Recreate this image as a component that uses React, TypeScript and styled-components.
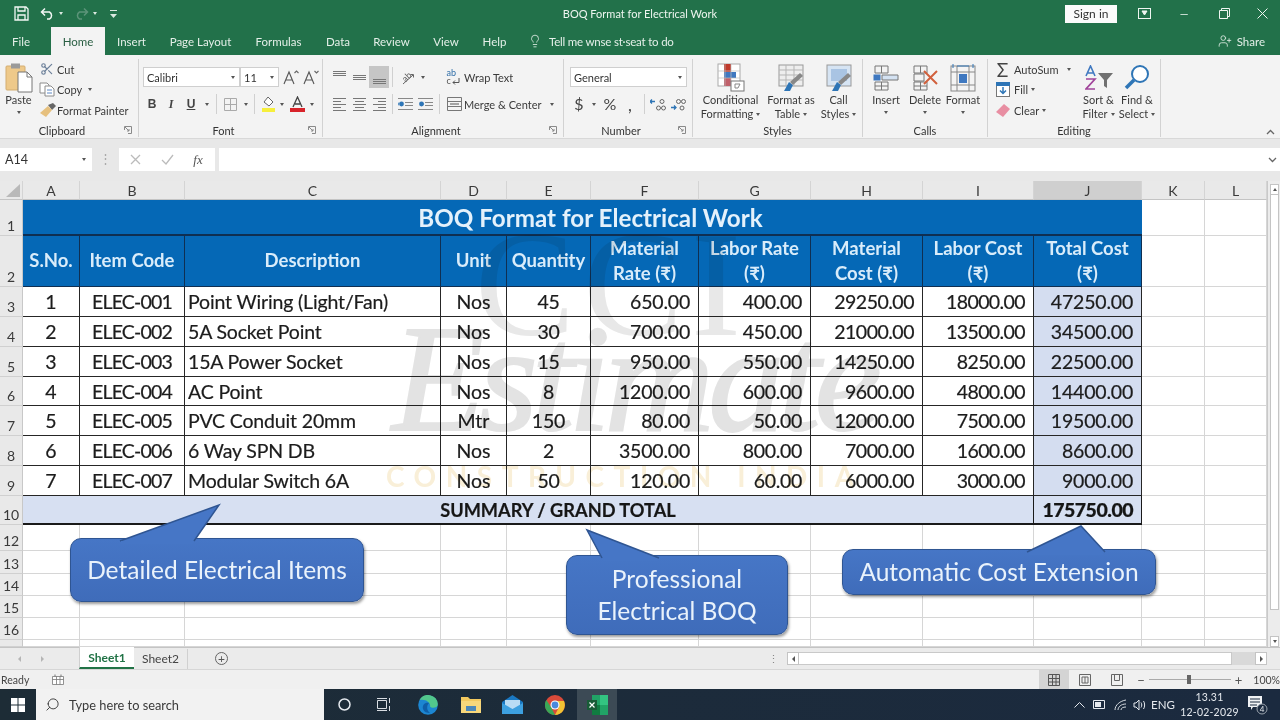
import React from "react";
import styled, { createGlobalStyle } from "styled-components";
import { Scissors, Search, Lightbulb, UserPlus } from "lucide-react";

const GlobalStyle = createGlobalStyle`
  html, body { margin: 0; padding: 0; background: #fff; }
  body { font-family: Lato, "Open Sans", sans-serif; color: #333; }
  * { box-sizing: border-box; }
`;

const Window = styled.div`
  display: flex;
  flex-direction: column;
  width: 1280px;
  height: 720px;
  overflow: hidden;
`;

const TitleBar = styled.header`
  display: grid;
  grid-template-columns: 1fr auto 1fr;
  align-items: center;
  height: 27px;
  background: #22714a;
  color: #eef5f0;
  font-size: 11px;
`;
const BarSide = styled.div<{ $end?: boolean }>`
  display: flex;
  align-items: center;
  height: 100%;
  justify-content: ${(p) => (p.$end ? "flex-end" : "flex-start")};
  padding-left: ${(p) => (p.$end ? 0 : 12)}px;
`;
const Slot = styled.span<{ $w: number; $ml?: number }>`
  display: inline-flex;
  flex: none;
  align-items: center;
  justify-content: center;
  width: ${(p) => p.$w}px;
  margin-left: ${(p) => p.$ml ?? 0}px;
  height: 100%;
`;
const Caret = styled.i<{ $light?: boolean }>`
  display: inline-block;
  flex: none;
  width: 0;
  height: 0;
  border-left: 2.5px solid transparent;
  border-right: 2.5px solid transparent;
  border-top: 3px solid ${(p) => (p.$light ? "#dbe9e1" : "#555")};
`;
const SignIn = styled.button`
  width: 52px;
  height: 18px;
  margin-right: 7px;
  padding: 0;
  border: 0;
  background: #fbfbfb;
  color: #333;
  font: 12px Lato, sans-serif;
`;

const TabBar = styled.nav`
  display: flex;
  align-items: stretch;
  height: 28px;
  background: #22714a;
  color: #e4efe8;
  font-size: 11.5px;
`;
const Tab = styled.div<{ $w: number; $active?: boolean; $pr?: number }>`
  display: flex;
  align-items: center;
  justify-content: center;
  width: ${(p) => p.$w}px;
  padding-right: ${(p) => p.$pr ?? 0}px;
  background: ${(p) => (p.$active ? "#f3f3f3" : "transparent")};
  color: ${(p) => (p.$active ? "#2a5f43" : "inherit")};
`;
const TellMe = styled.div`
  display: flex;
  align-items: center;
  gap: 7px;
  margin-left: 10px;
  letter-spacing: -0.2px;
`;
const Share = styled.div`
  display: flex;
  align-items: center;
  gap: 5px;
  margin-left: auto;
  padding-right: 15px;
`;

const Ribbon = styled.section`
  display: flex;
  height: 84px;
  padding-top: 4px;
  background: #f3f3f3;
  border-bottom: 1px solid #d8d8d8;
  font-size: 11px;
  color: #3a3a3a;
`;
const Group = styled.div<{ $w: number }>`
  display: flex;
  flex: none;
  flex-direction: column;
  width: ${(p) => p.$w}px;
  height: 78px;
  border-right: 1px solid #d2d2d2;
`;
const GroupBody = styled.div<{ $pl?: number }>`
  display: flex;
  flex: 1;
  min-height: 0;
  padding-left: ${(p) => p.$pl ?? 0}px;
`;
const GroupFoot = styled.div`
  display: flex;
  align-items: center;
  flex: none;
  height: 14px;
`;
const GroupLabel = styled.span`
  flex: 1;
  text-align: center;
  color: #333;
`;
const Launcher = styled.span`
  display: flex;
  width: 14px;
  justify-content: flex-start;
`;
const Collapse = styled.div`
  align-self: flex-end;
  margin: 0 5px 1px auto;
`;
const Col = styled.div<{ $w?: number }>`
  display: flex;
  flex-direction: column;
  flex: none;
  width: ${(p) => (p.$w ? `${p.$w}px` : "auto")};
`;
const SmallRow = styled.div`
  display: flex;
  align-items: center;
  height: 20.5px;
  white-space: nowrap;
`;
const TwoRows = styled.div<{ $w?: number }>`
  display: flex;
  flex-direction: column;
  gap: 7px;
  padding-top: 8px;
  flex: none;
  width: ${(p) => (p.$w ? `${p.$w}px` : "auto")};
`;
const ToolRow = styled.div`
  display: flex;
  align-items: center;
  height: 20px;
  white-space: nowrap;
`;
const Select = styled.div<{ $w: number }>`
  display: flex;
  align-items: center;
  justify-content: space-between;
  width: ${(p) => p.$w}px;
  height: 20px;
  padding: 0 4px 0 3px;
  background: #fff;
  border: 1px solid #cfcfcf;
  color: #333;
`;
const Sep = styled.span<{ $w: number }>`
  display: flex;
  justify-content: center;
  flex: none;
  width: ${(p) => p.$w}px;
  height: 20px;
  &::after {
    content: "";
    width: 1px;
    background: #d0d0d0;
  }
`;
const Pressed = styled(Slot)`
  background: #c6c6c6;
  height: 22px;
`;
const BoldLetter = styled.span<{ $italic?: boolean; $under?: boolean }>`
  font-size: 12px;
  font-weight: 700;
  font-style: ${(p) => (p.$italic ? "italic" : "normal")};
  font-family: ${(p) => (p.$italic ? '"Liberation Serif"' : '"Liberation Sans"')}, serif;
  text-decoration: ${(p) => (p.$under ? "underline" : "none")};
  color: #444;
`;
const Glyph = styled.span<{ $size: number }>`
  font-size: ${(p) => p.$size}px;
  color: #444;
  line-height: 1;
`;
const Big = styled.div<{ $w: number }>`
  display: flex;
  flex: none;
  flex-direction: column;
  align-items: center;
  width: ${(p) => p.$w}px;
  padding-top: 3px;
  line-height: 14px;
  white-space: nowrap;
  text-align: center;
`;
const BigIcon = styled.div`
  display: flex;
  align-items: center;
  justify-content: center;
  flex: none;
  height: 31px;
`;
const BigCaret = styled.div`
  display: flex;
  justify-content: center;
  padding-top: 4px;
  height: 14px;
`;
const ToolLine = styled.span`
  display: inline-flex;
  align-items: center;
  gap: 3px;
`;
const TinyWord = styled.span<{ $turned?: boolean; $blue?: boolean }>`
  display: block;
  font-size: 9px;
  line-height: 8px;
  color: ${(p) => (p.$blue ? "#2f6ea8" : "#555")};
  transform: ${(p) => (p.$turned ? "rotate(-45deg)" : "none")};
`;
const OrientStack = styled.span`
  position: relative;
  display: flex;
  align-items: center;
  justify-content: center;
  width: 17px;
  height: 17px;
`;
const OrientArrow = styled.svg`
  position: absolute;
  left: 1px;
  top: 3px;
`;
const WrapStack = styled.span`
  display: flex;
  flex-direction: column;
  width: 15px;
`;
const WrapLine = styled.span`
  display: flex;
  align-items: center;
  gap: 1px;
`;

const FormulaBand = styled.div`
  display: flex;
  align-items: flex-start;
  height: 42px;
  padding-top: 9px;
  background: #e8e8e8;
`;
const NameBox = styled.div`
  display: flex;
  align-items: center;
  justify-content: space-between;
  width: 92px;
  height: 23px;
  padding: 0 6px 0 5px;
  background: #fff;
  font-size: 12.5px;
`;
const Dots = styled.div`
  display: flex;
  justify-content: center;
  width: 27px;
  height: 23px;
  color: #aaa;
  line-height: 21px;
  font-size: 13px;
`;
const FxBox = styled.div`
  display: flex;
  align-items: center;
  width: 96px;
  height: 23px;
  margin-right: 4px;
  background: #fff;
`;
const FxText = styled.span`
  font: italic 13px "Liberation Serif", serif;
  color: #555;
`;
const FormulaInput = styled.div`
  display: flex;
  align-items: center;
  justify-content: flex-end;
  flex: 1;
  height: 23px;
  padding-right: 3px;
  background: #fff;
`;

const SheetArea = styled.main`
  position: relative;
  display: flex;
  height: 466px;
`;
const Grid = styled.div`
  display: grid;
  grid-template-columns: 23px 57px 105px 256px 66px 84px 108px 112px 112px 111px 108px 63px 62px;
  grid-template-rows: 19px 36px 51px 30px 30px 30px 29px 30px 30px 30px 29px 26px 23px 22px 22px 22px 7px;
  flex: none;
  width: 1267px;
  background: #fff;
  overflow: hidden;
`;
const ColHead = styled.div<{ $on?: boolean }>`
  display: flex;
  align-items: center;
  justify-content: center;
  background: ${(p) => (p.$on ? "#cfcfcf" : "#e9e9e9")};
  border-right: 1px solid #d4d4d4;
  border-bottom: 1px solid #c4c4c4;
  font-size: 14px;
  color: #3a3a3a;
`;
const Corner = styled(ColHead)`
  align-items: flex-end;
  justify-content: flex-end;
  padding: 0 2px 2px 0;
`;
const RowHead = styled.div`
  display: flex;
  align-items: flex-end;
  justify-content: center;
  background: #e9e9e9;
  border-right: 1px solid #c8c8c8;
  border-bottom: 1px solid #d0d0d0;
  font-size: 14px;
  line-height: 19px;
  color: #3a3a3a;
`;
const Blank = styled.div`
  border-right: 1px solid #d6d6d6;
  border-bottom: 1px solid #d6d6d6;
`;
const TitleCell = styled.div`
  grid-column: span 10;
  display: flex;
  align-items: center;
  justify-content: center;
  padding-left: 16px;
  background: #0568b6;
  border-bottom: 2px solid #0f2f52;
  color: #e4f1fb;
  font-size: 24.2px;
  font-weight: 700;
`;
const HeadCell = styled.div`
  display: flex;
  align-items: center;
  justify-content: center;
  background: #0568b6;
  border-right: 1.5px solid #0f2f52;
  border-bottom: 1.5px solid #0f2f52;
  color: #d9ecfa;
  font-size: 18.5px;
  font-weight: 700;
  line-height: 25px;
  text-align: center;
  padding-bottom: 1px;
`;
const DataCell = styled.div<{ $align: "left" | "center" | "right"; $total?: boolean; $ls: number }>`
  display: flex;
  align-items: center;
  justify-content: ${(p) =>
    p.$align === "left" ? "flex-start" : p.$align === "right" ? "flex-end" : "center"};
  padding: 0 ${(p) => (p.$align === "right" ? 8 : 0)}px 0 ${(p) => (p.$align === "left" ? 3 : 0)}px;
  background: ${(p) => (p.$total ? "#d4ddf0" : "transparent")};
  border-right: 1.5px solid #262626;
  border-bottom: 1.5px solid #262626;
  color: #1c1c1c;
  font-size: 19.5px;
  letter-spacing: ${(p) => p.$ls}px;
  -webkit-text-stroke: 0.2px #1c1c1c;
  white-space: nowrap;
`;
const SummaryCell = styled.div`
  grid-column: span 9;
  display: flex;
  align-items: center;
  justify-content: center;
  padding-left: 60px;
  background: #d7e0f2;
  border-right: 1.5px solid #1a1a1a;
  border-bottom: 2px solid #1a1a1a;
  color: #161616;
  font-size: 18.2px;
  font-weight: 700;
  -webkit-text-stroke: 0.2px #161616;
  white-space: nowrap;
`;
const SummaryTotal = styled(SummaryCell)`
  grid-column: span 1;
  justify-content: flex-end;
  padding: 0 8px 0 0;
  font-size: 19.5px;
  font-weight: 900;
  letter-spacing: -0.5px;
`;

const Watermark = styled.div`
  position: absolute;
  inset: 0;
  pointer-events: none;
  mix-blend-mode: multiply;
  overflow: hidden;
`;
const MarkTop = styled.div`
  position: absolute;
  left: 475px;
  top: 28px;
  font: 150px/1 "Liberation Serif", serif;
  letter-spacing: 8px;
  color: #e8e8e8;
`;
const MarkScript = styled.div`
  position: absolute;
  left: 392px;
  top: 122px;
  font: italic 400 152px/1 "Liberation Serif", serif;
  letter-spacing: -6px;
  color: #e3e3e3;
  -webkit-text-stroke: 2px #e3e3e3;
`;
const MarkLine = styled.div`
  position: absolute;
  left: 386px;
  top: 281px;
  font: 700 28px/1 Lato, sans-serif;
  letter-spacing: 9.5px;
  color: #f9efd8;
  white-space: nowrap;
`;

const Callout = styled.div<{ $x: number; $y: number; $w: number; $h: number }>`
  position: absolute;
  left: ${(p) => p.$x}px;
  top: ${(p) => p.$y}px;
  width: ${(p) => p.$w}px;
  height: ${(p) => p.$h}px;
  display: flex;
  align-items: center;
  justify-content: center;
  text-align: center;
  background: linear-gradient(#4676c6, #3f6cba);
  border: 1.5px solid #2f5592;
  border-radius: 11px;
  box-shadow: 1px 2px 3px rgba(0, 0, 0, 0.4);
  color: #e9f2fb;
  font-size: 24.5px;
  line-height: 32px;
`;
const Tail = styled.svg<{ $x: number; $h: number }>`
  position: absolute;
  left: ${(p) => p.$x}px;
  bottom: calc(100% - 2px);
  height: ${(p) => p.$h}px;
  overflow: visible;
`;

const VScroll = styled.aside`
  display: flex;
  flex-direction: column;
  flex: 1;
  background: #ececec;
  border-left: 1px solid #c9c9c9;
  padding: 3px 1px 0 2px;
`;
const ScrollBtn = styled.div<{ $down?: boolean }>`
  display: flex;
  align-items: center;
  justify-content: center;
  height: 11px;
  background: #fff;
  border: 1px solid #c4c4c4;
  &::after {
    content: "";
    border-left: 2.5px solid transparent;
    border-right: 2.5px solid transparent;
    ${(p) => (p.$down ? "border-top: 3px solid #555;" : "border-bottom: 3px solid #555;")}
  }
`;
const VThumb = styled.div`
  height: 415px;
  background: #fff;
  border: 1px solid #c4c4c4;
  border-top: 0;
`;
const VTrack = styled.div`
  flex: 1;
`;

const SheetStrip = styled.div`
  display: flex;
  align-items: center;
  height: 23px;
  background: #ebebeb;
  border-top: 1px solid #c4c4c4;
  border-bottom: 1px solid #d6d6d6;
  font-size: 12px;
`;
const NavArrow = styled.span<{ $w: number; $right?: boolean }>`
  display: flex;
  justify-content: center;
  width: ${(p) => p.$w}px;
  &::after {
    content: "";
    border-top: 3px solid transparent;
    border-bottom: 3px solid transparent;
    ${(p) => (p.$right ? "border-left: 3px solid #b5b5b5;" : "border-right: 3px solid #b5b5b5;")}
  }
`;
const SheetTab = styled.div<{ $active?: boolean; $w: number }>`
  display: flex;
  align-items: center;
  justify-content: center;
  width: ${(p) => p.$w}px;
  height: 22px;
  margin-top: -1px;
  background: ${(p) => (p.$active ? "#fff" : "transparent")};
  border-left: ${(p) => (p.$active ? "1px solid #cfcfcf" : "0")};
  border-bottom: ${(p) => (p.$active ? "2px solid #217346" : "0")};
  color: ${(p) => (p.$active ? "#217346" : "#444")};
  font-weight: ${(p) => (p.$active ? 700 : 400)};
`;
const AddSheet = styled.span`
  display: flex;
  align-items: center;
  justify-content: center;
  width: 13px;
  height: 13px;
  margin-left: 27px;
  border: 1px solid #666;
  border-radius: 50%;
  color: #555;
  font-size: 12px;
  line-height: 1;
`;
const SplitDots = styled.span`
  margin-left: auto;
  width: 14px;
  color: #888;
  text-align: center;
  font-size: 11px;
  line-height: 1;
`;
const HScroll = styled.div`
  display: flex;
  align-items: center;
  width: 480px;
  height: 13px;
  margin-right: 13px;
  background: #d9d9d9;
`;
const HButton = styled.span<{ $right?: boolean }>`
  display: flex;
  align-items: center;
  justify-content: center;
  width: 12px;
  height: 13px;
  background: #fff;
  border: 1px solid #c4c4c4;
  margin-left: ${(p) => (p.$right ? "23px" : "0")};
  &::after {
    content: "";
    border-top: 3px solid transparent;
    border-bottom: 3px solid transparent;
    ${(p) => (p.$right ? "border-left: 3px solid #555;" : "border-right: 3px solid #555;")}
  }
`;
const HThumb = styled.span`
  width: 433px;
  height: 13px;
  background: #fff;
  border: 1px solid #c9c9c9;
  border-left: 0;
`;

const StatusBar = styled.footer`
  display: flex;
  align-items: center;
  height: 19px;
  background: #f0f0f0;
  padding-left: 1px;
  font-size: 10.5px;
  color: #444;
`;
const StatusRight = styled.div`
  display: flex;
  align-items: center;
  height: 100%;
  margin-left: auto;
`;
const ViewBtn = styled(Slot)<{ $on?: boolean }>`
  background: ${(p) => (p.$on ? "#d4d4d4" : "transparent")};
`;
const ZoomSign = styled.span<{ $w: number }>`
  width: ${(p) => p.$w}px;
  text-align: center;
  font-size: 13px;
  color: #555;
`;
const ZoomTrack = styled.div`
  position: relative;
  width: 82px;
  height: 1px;
  background: #aaa;
`;
const ZoomThumb = styled.span`
  position: absolute;
  left: 38px;
  top: -4px;
  width: 4px;
  height: 9px;
  background: #666;
`;
const ZoomValue = styled.span`
  width: 34px;
  text-align: right;
  font-size: 10.5px;
`;

const Taskbar = styled.div`
  display: flex;
  align-items: center;
  height: 31px;
  background: linear-gradient(90deg, #1d2c36, #1b2a3f);
  color: #e5e9ee;
`;
const SearchBox = styled.div`
  display: flex;
  align-items: center;
  gap: 9px;
  width: 288px;
  height: 100%;
  padding-left: 9px;
  background: #f2f2f2;
  color: #3a3a3a;
  font-size: 12.8px;
`;
const ActiveApp = styled(Slot)`
  background: #3c4a55;
`;
const Tray = styled.div`
  display: flex;
  align-items: center;
  height: 100%;
  margin-left: auto;
  padding-right: 6px;
  font-size: 11.5px;
`;
const Clock = styled.div`
  width: 65px;
  text-align: center;
  font-size: 10.5px;
  line-height: 15px;
  letter-spacing: 0.2px;
`;

/* ---------- icons ---------- */

const SaveIcon = () => (
  <svg width="15" height="15" viewBox="0 0 15 15" fill="none" stroke="#f2f7f4" strokeWidth="1.3">
    <path d="M1 1h11l2 2v11H1z" />
    <path d="M4 1v4h7V1M4 14V9h7v5" />
  </svg>
);
const UndoIcon = ({ faded }: { faded?: boolean }) => (
  <svg
    width="15"
    height="13"
    viewBox="0 0 15 13"
    fill="none"
    stroke={faded ? "#5c9479" : "#f2f7f4"}
    strokeWidth="1.5"
    style={faded ? { transform: "scaleX(-1)" } : undefined}
  >
    <path d="M1.5 5h8a4 4 0 0 1 0 7H7M5 1.5 1.5 5 5 8.5" />
  </svg>
);
const QuickMenu = () => (
  <svg width="7" height="8" viewBox="0 0 7 8" fill="#dbe9e1">
    <rect y="0" width="7" height="1" />
    <path d="M0 4h7L3.5 8z" />
  </svg>
);
const RibbonMode = () => (
  <svg width="13" height="11" viewBox="0 0 13 11" fill="none" stroke="#eef5f0">
    <rect x="0.5" y="0.5" width="12" height="10" />
    <path d="M4 3h5L6.5 7z" fill="#eef5f0" />
  </svg>
);
const Restore = () => (
  <svg width="11" height="11" viewBox="0 0 11 11" fill="none" stroke="#eef5f0">
    <path d="M.5 2.5h8v8h-8zM2.5 2.5v-2h8v8h-2" />
  </svg>
);
const CloseX = () => (
  <svg width="11" height="11" viewBox="0 0 11 11" stroke="#eef5f0">
    <path d="M.5.5l10 10M10.5.5l-10 10" />
  </svg>
);
const PasteIcon = () => (
  <svg width="28" height="30" viewBox="0 0 28 30">
    <rect x="1" y="3" width="19" height="24" rx="1" fill="#eec98a" stroke="#d3ad70" />
    <rect x="6" y="0.5" width="9" height="5" fill="#9a9a9a" />
    <path d="M13 9h9l5 5v15H13z" fill="#fff" stroke="#777" />
    <path d="M22 9v5h5" fill="none" stroke="#777" />
  </svg>
);
const CopyIcon = () => (
  <svg width="16" height="15" viewBox="0 0 16 15" fill="#fff" stroke="#8c8c8c">
    <path d="M1 1h7l2 2v8H1z" />
    <path d="M6 4h6l3 3v7H6z" />
    <path d="M8 8h5M8 11h5" stroke="#5c88c4" />
  </svg>
);
const PainterIcon = () => (
  <svg width="17" height="14" viewBox="0 0 17 14">
    <path d="M9 2l5-2 3 3-4 4z" fill="#666" />
    <path d="M1 10l8-7 4 4-6 7z" fill="#e6c07e" />
  </svg>
);
const Launch = () => (
  <svg width="8" height="8" viewBox="0 0 8 8" fill="none" stroke="#8a8a8a">
    <path d="M.5 4V.5H7.5V7.5H4" />
    <path d="M1 1l4 4M5 3v2H3" />
  </svg>
);
const GrowA = ({ up }: { up?: boolean }) => (
  <svg width="16" height="15" viewBox="0 0 16 15" fill="none" stroke="#555" strokeWidth="1.1">
    <path d="M1 14 6 2l5 12M3 10h6" />
    <path d={up ? "M11.5 3l2-2 2 2" : "M11.5 1l2 2 2-2"} stroke="#666" />
  </svg>
);
const BorderIcon = () => (
  <svg width="13" height="13" viewBox="0 0 13 13" fill="none" stroke="#aaa">
    <path d="M.5.5h12v12H.5zM6.5.5v12M.5 6.5h12" />
  </svg>
);
const FillIcon = () => (
  <svg width="15" height="16" viewBox="0 0 15 16">
    <path d="M7 1l5 5-4 4-5-4z" fill="#fff" stroke="#666" />
    <rect x="1" y="12" width="13" height="4" fill="#f6ef3c" />
  </svg>
);
const ColorA = () => (
  <svg width="15" height="16" viewBox="0 0 15 16">
    <path d="M3 11 7.5 1 12 11M5 8h5" fill="none" stroke="#444" strokeWidth="1.3" />
    <rect x="0" y="12" width="15" height="4" fill="#d8232a" />
  </svg>
);
const Lines = ({ kind }: { kind: "top" | "mid" | "bottom" | "left" | "center" | "right" }) => {
  if (kind === "top" || kind === "mid" || kind === "bottom") {
    const y = kind === "top" ? 1 : kind === "mid" ? 5 : 9;
    return (
      <svg width="13" height="14" viewBox="0 0 13 14" stroke="#777">
        <path d={`M0 ${y}.5h13M0 ${y + 2}.5h13M0 ${y + 4}.5h13`} />
      </svg>
    );
  }
  const short = kind === "left" ? "M0 3.5h8M0 9.5h8" : kind === "center" ? "M2 3.5h9M2 9.5h9" : "M5 3.5h8M5 9.5h8";
  return (
    <svg width="13" height="13" viewBox="0 0 13 13" stroke="#777">
      <path d={`M0 .5h13M0 6.5h13M0 12.5h13${short}`} />
    </svg>
  );
};
const Orient = () => (
  <OrientStack>
    <TinyWord $turned>ab</TinyWord>
    <OrientArrow width="15" height="13" viewBox="0 0 15 13" fill="none" stroke="#666">
      <path d="M3 12 13 3M10.500 2.500H13.500V5.500" />
    </OrientArrow>
  </OrientStack>
);
const Indent = ({ flip }: { flip?: boolean }) => (
  <svg width="15" height="12" viewBox="0 0 15 12" stroke="#888">
    <path d="M0 .5h15M7 4.500h8M7 7.500h8M0 11.500h15" />
    <circle cx="3.500" cy="6" r="2.400" fill="#2e75b6" stroke="none" />
    <path d={flip ? "M6 6 4 4v4z" : "M0 6l1-2v4z"} fill="#2e75b6" stroke="none" />
  </svg>
);
const WrapIcon = () => (
  <WrapStack>
    <TinyWord $blue>ab</TinyWord>
    <WrapLine>
      <TinyWord>c</TinyWord>
      <svg width="8" height="7" viewBox="0 0 8 7" fill="none" stroke="#555">
        <path d="M1 4.500h6V0M1 4.500l2-2M1 4.500l2 2" />
      </svg>
    </WrapLine>
  </WrapStack>
);
const MergeIcon = () => (
  <svg width="15" height="14" viewBox="0 0 15 14" fill="none" stroke="#777">
    <path d="M.5.5h14v13H.5zM.5 4.500h14M.5 9.500h14" />
    <path d="M3 7h9" stroke="#555" />
  </svg>
);
const DecIcon = ({ more }: { more?: boolean }) => (
  <svg width="17" height="13" viewBox="0 0 17 13" fill="none">
    <path d={more ? "M0 3.500h5M2 1.500 0 3.500l2 2" : "M1 9.500h5M4 7.500l2 2-2 2"} stroke="#2e75b6" strokeWidth="1.3" />
    <circle cx="8.500" cy={more ? 10 : 3.5} r="2" stroke="#666" />
    <circle cx="13.500" cy={more ? 10 : 3.5} r="2" stroke="#666" />
    <circle cx="12" cy={more ? 3.5 : 10} r="2" stroke="#666" />
  </svg>
);
const CondIcon = () => (
  <svg width="28" height="29" viewBox="0 0 28 29">
    <rect x="1" y="1" width="22" height="22" fill="#fff" stroke="#aaa" />
    <rect x="7" y="1" width="7" height="8" fill="#c0392b" />
    <rect x="7" y="9" width="12" height="6" fill="#3f78c0" />
    <rect x="7" y="15" width="7" height="8" fill="#c0606a" />
    <path d="M8 1v22M14 1v22M1 8h22M1 15h22" stroke="#bbb" strokeWidth=".7" />
    <rect x="14" y="18" width="13" height="10" fill="#fff" stroke="#777" />
    <path d="M18 21h5l-2 4h-3z" fill="none" stroke="#888" />
  </svg>
);
const TableIcon = ({ light }: { light?: boolean }) => (
  <svg width="28" height="28" viewBox="0 0 28 28">
    <rect x="2" y="1" width="24" height="21" fill={light ? "#d6e4f3" : "#eee"} stroke="#999" />
    {!light && <path d="M2 6h24M2 11h24M2 16h24M9 1v21M17 1v21" stroke="#b5b5b5" />}
    {light && <rect x="6" y="5" width="16" height="12" fill="#a9c4e3" />}
    <path d="M7 27l5-9 4 3-3 6z" fill="#2e75b6" />
    <path d="M13 18l10-9 3 3-10 9z" fill="#888" />
  </svg>
);
const InsertIcon = ({ cross }: { cross?: boolean }) => (
  <svg width="28" height="26" viewBox="0 0 28 26" fill="#fff" stroke="#777">
    <path d="M3 1h13v7H3zM9.500 1v7" fill="none" />
    <path d="M3 17h13v8H3zM9.500 17v8M3 21h13" fill="none" />
    {cross ? (
      <>
        <path d="M3 9h10v7H3z" fill="none" />
        <path d="M13 6l13 13M26 6 13 19" stroke="#d1603d" strokeWidth="2" />
      </>
    ) : (
      <>
        <rect x="2" y="10" width="6" height="5" fill="#3f78c0" stroke="#3f78c0" />
        <path d="M10 10h16v5H10z" fill="#d4e2f2" />
      </>
    )}
  </svg>
);
const FormatIcon = () => (
  <svg width="26" height="28" viewBox="0 0 26 28" fill="#fff" stroke="#888">
    <rect x="1" y="2" width="24" height="25" fill="#f4f4f4" />
    <path d="M7 2v25M19 2v25M1 8h24M1 21h24" />
    <rect x="9" y="10" width="8" height="9" fill="#3f78c0" stroke="none" />
    <path d="M3 0v4M23 0v4M7 2h12" stroke="#2e75b6" />
  </svg>
);
const FillDown = () => (
  <svg width="14" height="15" viewBox="0 0 14 15" fill="#fff" stroke="#777">
    <rect x=".5" y=".5" width="13" height="14" />
    <rect x=".5" y=".5" width="13" height="3" fill="#2e75b6" stroke="#2e75b6" />
    <path d="M7 5v6M4 8.500l3 3 3-3" stroke="#2e75b6" fill="none" strokeWidth="1.5" />
  </svg>
);
const Eraser = () => (
  <svg width="14" height="13" viewBox="0 0 14 13">
    <path d="M8 0l6 5-7 8-7-5z" fill="#e88ea2" />
  </svg>
);
const SortIcon = () => (
  <svg width="28" height="26" viewBox="0 0 28 26">
    <path d="M1 11 5.500 1 10 11M3 8h5" fill="none" stroke="#3f78c0" strokeWidth="1.6" />
    <path d="M1 14h9L1 24h9" fill="none" stroke="#a0449a" strokeWidth="1.7" />
    <path d="M13 8h15l-6 7v8l-3-2v-6z" fill="#707070" />
  </svg>
);
const FindIcon = () => (
  <svg width="27" height="27" viewBox="0 0 27 27" fill="none">
    <circle cx="16" cy="10" r="8" fill="#fff" stroke="#2e75b6" strokeWidth="2" />
    <path d="M10 16 2 24" stroke="#2e75b6" strokeWidth="3.5" />
  </svg>
);
const MacroIcon = () => (
  <svg width="12" height="11" viewBox="0 0 12 11" fill="#fff" stroke="#777">
    <path d="M.5 2.500h11v8H.5zM.5 5.500h11M4.500 2.500v8M8 2.500v8" strokeWidth=".8" />
    <path d="M3 .5v2M9 .5v2" />
  </svg>
);
const NormalView = () => (
  <svg width="12" height="12" viewBox="0 0 12 12" fill="none" stroke="#555">
    <path d="M.5.500h11v11H.5zM.5 4.500h11M.5 8h11M4.500.500v11M8 .500v11" />
  </svg>
);
const PageView = () => (
  <svg width="12" height="12" viewBox="0 0 12 12" fill="none" stroke="#666">
    <path d="M.5.500h11v11H.5zM3 3h6v6H3zM6 3v6" />
  </svg>
);
const BreakView = () => (
  <svg width="12" height="12" viewBox="0 0 12 12" fill="none" stroke="#666">
    <path d="M.5.500h11v11H.5zM3.500 .5v6h5v-6" />
  </svg>
);
const StartLogo = () => (
  <svg width="14" height="14" viewBox="0 0 14 14" fill="#fff">
    <rect width="6.500" height="6.500" />
    <rect x="7.500" width="6.500" height="6.500" />
    <rect y="7.500" width="6.500" height="6.500" />
    <rect x="7.500" y="7.500" width="6.500" height="6.500" />
  </svg>
);
const TaskView = () => (
  <svg width="15" height="13" viewBox="0 0 15 13" fill="none" stroke="#d9dde2">
    <path d="M.5 2.500h9v8h-9zM0 .5h10M0 12.500h10M12.500 0v5M12.500 8v5" />
  </svg>
);
const EdgeIcon = () => (
  <svg width="20" height="20" viewBox="0 0 20 20">
    <circle cx="10" cy="10" r="9.800" fill="#1c86d1" />
    <path d="M1.500 5A9.800 9.800 0 0 1 19.800 9C19.800 13 14 14 12 11.500 13 8 8 3.500 1.500 5z" fill="#52c78c" />
    <path d="M11 8c-4-1-7 2-6 6 1 3 4 4 7 4-3-2-4-7-1-10z" fill="#0f5ea8" />
  </svg>
);
const FolderIcon = () => (
  <svg width="20" height="17" viewBox="0 0 20 17">
    <path d="M0 1h7l2 2h11v14H0z" fill="#f3c95f" />
    <rect y="5" width="20" height="12" fill="#f7d77b" />
    <rect x="5" y="10" width="10" height="5" fill="#4c87b9" />
  </svg>
);
const MailIcon = () => (
  <svg width="21" height="19" viewBox="0 0 21 19">
    <path d="M10.500 0 21 7v12H0V7z" fill="#1a78c2" />
    <path d="M3 5h15v6l-7.500 4L3 11z" fill="#b9dcf5" />
    <path d="M0 8l10.500 6L21 8v11H0z" fill="#3da0e0" />
  </svg>
);
const ChromeIcon = () => (
  <svg width="20" height="20" viewBox="0 0 20 20">
    <circle cx="10" cy="10" r="10" fill="#d94a3a" />
    <path d="M10 20A10 10 0 0 1 1.300 5L6 12l4 8z" fill="#3aa757" />
    <path d="M10 20 14 12 10 6h9A10 10 0 0 1 10 20z" fill="#f2c233" />
    <circle cx="10" cy="10" r="4.500" fill="#fff" />
    <circle cx="10" cy="10" r="3.400" fill="#4a89dc" />
  </svg>
);
const ExcelIcon = () => (
  <svg width="21" height="20" viewBox="0 0 21 20">
    <rect x="5" y="0" width="16" height="20" fill="#21a366" />
    <rect x="13" y="0" width="8" height="10" fill="#33c481" />
    <rect x="5" y="10" width="8" height="10" fill="#107c41" />
    <rect x="0" y="5" width="10" height="10" fill="#185c37" />
    <path d="M2.500 7.500l5 5M7.500 7.500l-5 5" stroke="#fff" strokeWidth="1.200" />
  </svg>
);
const TrayUp = () => (
  <svg width="11" height="6" viewBox="0 0 11 6" fill="none" stroke="#e5e9ee">
    <path d="M.5 5.500l5-5 5 5" />
  </svg>
);
const Battery = () => (
  <svg width="13" height="9" viewBox="0 0 13 9" fill="none" stroke="#e5e9ee">
    <path d="M.5.500h11v8H.5z" />
    <rect x="2" y="2" width="6" height="5" fill="#e5e9ee" stroke="none" />
  </svg>
);
const Wifi = () => (
  <svg width="13" height="12" viewBox="0 0 13 12" fill="none" stroke="#d5dae0">
    <path d="M1 11C1 6 6 2 12 1M4 11c0-3 3-6 8-6M7 11c0-2 2-3 5-3" />
  </svg>
);
const Volume = () => (
  <svg width="13" height="12" viewBox="0 0 13 12" fill="none" stroke="#e5e9ee">
    <path d="M1 4h2l3-3v10L3 8H1zM8 3.500c1 1.500 1 3.500 0 5M10.500 2c1.500 2 1.500 6 0 8" />
  </svg>
);
const Notify = () => (
  <svg width="22" height="20" viewBox="0 0 22 20">
    <path d="M1 1h14v11H6l-2 3v-3H1z" fill="#f0f2f4" />
    <path d="M3 4h10M3 7h10M3 10h7" stroke="#1b2a3f" />
    <circle cx="15" cy="14" r="5" fill="#1b2a3f" stroke="#9aa3ad" />
    <text x="15" y="17" fontSize="8" textAnchor="middle" fill="#dfe4e8" fontFamily="Lato, sans-serif">4</text>
  </svg>
);
const Chevron = ({ up }: { up?: boolean }) => (
  <svg width="9" height="6" viewBox="0 0 9 6" fill="none" stroke="#666" strokeWidth="1.300">
    <path d={up ? "M1 5l3.500-3.500L8 5" : "M1 1l3.500 3.500L8 1"} />
  </svg>
);

/* ---------- data ---------- */

const COLUMNS = ["A", "B", "C", "D", "E", "F", "G", "H", "I", "J", "K", "L"];
const HEADERS: React.ReactNode[] = [
  "S.No.",
  "Item Code",
  "Description",
  "Unit",
  "Quantity",
  <>Material<br />Rate (₹)</>,
  <>Labor Rate<br />(₹)</>,
  <>Material<br />Cost (₹)</>,
  <>Labor Cost<br />(₹)</>,
  <>Total Cost<br />(₹)</>,
];
const ITEMS = [
  ["1", "ELEC-001", "Point Wiring (Light/Fan)", "Nos", "45", "650.00", "400.00", "29250.00", "18000.00", "47250.00"],
  ["2", "ELEC-002", "5A Socket Point", "Nos", "30", "700.00", "450.00", "21000.00", "13500.00", "34500.00"],
  ["3", "ELEC-003", "15A Power Socket", "Nos", "15", "950.00", "550.00", "14250.00", "8250.00", "22500.00"],
  ["4", "ELEC-004", "AC Point", "Nos", "8", "1200.00", "600.00", "9600.00", "4800.00", "14400.00"],
  ["5", "ELEC-005", "PVC Conduit 20mm", "Mtr", "150", "80.00", "50.00", "12000.00", "7500.00", "19500.00"],
  ["6", "ELEC-006", "6 Way SPN DB", "Nos", "2", "3500.00", "800.00", "7000.00", "1600.00", "8600.00"],
  ["7", "ELEC-007", "Modular Switch 6A", "Nos", "50", "120.00", "60.00", "6000.00", "3000.00", "9000.00"],
];
const ALIGN: ("left" | "center" | "right")[] = [
  "center", "center", "left", "center", "center", "right", "right", "right", "right", "right",
];
// Lato runs wider than the sheet's font, more so on digits and capitals
const TRACKING = [0, -0.8, -0.15, 0, -0.2, -0.2, -0.3, -0.5, -0.6, -0.2];
const EMPTY_ROWS = ["12", "13", "14", "15", "16", ""];

const Foot = ({ label, launcher }: { label: string; launcher?: boolean }) => (
  <GroupFoot>
    <GroupLabel>{label}</GroupLabel>
    {launcher && (
      <Launcher>
        <Launch />
      </Launcher>
    )}
  </GroupFoot>
);

function RibbonPanel() {
  return (
    <Ribbon>
      <Group $w={139}>
        <GroupBody>
          <Big $w={37}>
            <BigIcon>
              <PasteIcon />
            </BigIcon>
            Paste
            <BigCaret>
              <Caret />
            </BigCaret>
          </Big>
          <Col>
            <SmallRow>
              <Slot $w={20}>
                <Scissors size={14} color="#6b7f99" />
              </Slot>
              Cut
            </SmallRow>
            <SmallRow>
              <Slot $w={20}>
                <CopyIcon />
              </Slot>
              Copy
              <Slot $w={16}>
                <Caret />
              </Slot>
            </SmallRow>
            <SmallRow>
              <Slot $w={20}>
                <PainterIcon />
              </Slot>
              Format Painter
            </SmallRow>
          </Col>
        </GroupBody>
        <Foot label="Clipboard" launcher />
      </Group>

      <Group $w={184}>
        <GroupBody $pl={4}>
          <TwoRows>
            <ToolRow>
              <Select $w={97}>
                Calibri
                <Caret />
              </Select>
              <Select $w={39}>
                11
                <Caret />
              </Select>
              <Slot $w={20} $ml={2}>
                <GrowA up />
              </Slot>
              <Slot $w={20}>
                <GrowA />
              </Slot>
            </ToolRow>
            <ToolRow>
              <Slot $w={18}>
                <BoldLetter>B</BoldLetter>
              </Slot>
              <Slot $w={20}>
                <BoldLetter $italic>I</BoldLetter>
              </Slot>
              <Slot $w={20}>
                <BoldLetter $under>U</BoldLetter>
              </Slot>
              <Slot $w={12}>
                <Caret />
              </Slot>
              <Sep $w={6} />
              <Slot $w={22}>
                <BorderIcon />
              </Slot>
              <Slot $w={10}>
                <Caret />
              </Slot>
              <Sep $w={6} />
              <Slot $w={22}>
                <FillIcon />
              </Slot>
              <Slot $w={6}>
                <Caret />
              </Slot>
              <Slot $w={24}>
                <ColorA />
              </Slot>
              <Slot $w={6}>
                <Caret />
              </Slot>
            </ToolRow>
          </TwoRows>
        </GroupBody>
        <Foot label="Font" launcher />
      </Group>

      <Group $w={241}>
        <GroupBody $pl={6}>
          <TwoRows $w={115}>
            <ToolRow>
              <Slot $w={20}>
                <Lines kind="top" />
              </Slot>
              <Slot $w={20}>
                <Lines kind="mid" />
              </Slot>
              <Pressed $w={20}>
                <Lines kind="bottom" />
              </Pressed>
              <Sep $w={6} />
              <Slot $w={24}>
                <Orient />
              </Slot>
              <Slot $w={8}>
                <Caret />
              </Slot>
            </ToolRow>
            <ToolRow>
              <Slot $w={20}>
                <Lines kind="left" />
              </Slot>
              <Slot $w={20}>
                <Lines kind="center" />
              </Slot>
              <Slot $w={20}>
                <Lines kind="right" />
              </Slot>
              <Sep $w={6} />
              <Slot $w={20}>
                <Indent />
              </Slot>
              <Slot $w={20}>
                <Indent flip />
              </Slot>
              <Sep $w={9} />
            </ToolRow>
          </TwoRows>
          <TwoRows $w={116}>
            <ToolRow>
              <Slot $w={20}>
                <WrapIcon />
              </Slot>
              Wrap Text
            </ToolRow>
            <ToolRow>
              <Slot $w={20}>
                <MergeIcon />
              </Slot>
              Merge &amp; Center
              <Slot $w={22}>
                <Caret />
              </Slot>
            </ToolRow>
          </TwoRows>
        </GroupBody>
        <Foot label="Alignment" launcher />
      </Group>

      <Group $w={129}>
        <GroupBody $pl={6}>
          <TwoRows>
            <ToolRow>
              <Select $w={117}>
                General
                <Caret />
              </Select>
            </ToolRow>
            <ToolRow>
              <Slot $w={18}>
                <Glyph $size={16}>$</Glyph>
              </Slot>
              <Slot $w={12}>
                <Caret />
              </Slot>
              <Slot $w={20}>
                <Glyph $size={16}>%</Glyph>
              </Slot>
              <Slot $w={20}>
                <Glyph $size={17}>,</Glyph>
              </Slot>
              <Sep $w={8} />
              <Slot $w={20}>
                <DecIcon more />
              </Slot>
              <Slot $w={20}>
                <DecIcon />
              </Slot>
            </ToolRow>
          </TwoRows>
        </GroupBody>
        <Foot label="Number" launcher />
      </Group>

      <Group $w={170}>
        <GroupBody $pl={1}>
          <Big $w={73}>
            <BigIcon>
              <CondIcon />
            </BigIcon>
            Conditional
            <ToolLine>
              Formatting <Caret />
            </ToolLine>
          </Big>
          <Big $w={48}>
            <BigIcon>
              <TableIcon />
            </BigIcon>
            Format as
            <ToolLine>
              Table <Caret />
            </ToolLine>
          </Big>
          <Big $w={47}>
            <BigIcon>
              <TableIcon light />
            </BigIcon>
            Call
            <ToolLine>
              Styles <Caret />
            </ToolLine>
          </Big>
        </GroupBody>
        <Foot label="Styles" />
      </Group>

      <Group $w={125}>
        <GroupBody $pl={4}>
          <Big $w={38}>
            <BigIcon>
              <InsertIcon />
            </BigIcon>
            Insert
            <BigCaret>
              <Caret />
            </BigCaret>
          </Big>
          <Big $w={40}>
            <BigIcon>
              <InsertIcon cross />
            </BigIcon>
            Delete
            <BigCaret>
              <Caret />
            </BigCaret>
          </Big>
          <Big $w={36}>
            <BigIcon>
              <FormatIcon />
            </BigIcon>
            Format
            <BigCaret>
              <Caret />
            </BigCaret>
          </Big>
        </GroupBody>
        <Foot label="Calls" />
      </Group>

      <Group $w={173}>
        <GroupBody $pl={3}>
          <Col $w={89}>
            <SmallRow>
              <Slot $w={23}>
                <Glyph $size={19}>Σ</Glyph>
              </Slot>
              AutoSum
              <Slot $w={22}>
                <Caret />
              </Slot>
            </SmallRow>
            <SmallRow>
              <Slot $w={23}>
                <FillDown />
              </Slot>
              Fill
              <Slot $w={10}>
                <Caret />
              </Slot>
            </SmallRow>
            <SmallRow>
              <Slot $w={23}>
                <Eraser />
              </Slot>
              Clear
              <Slot $w={9}>
                <Caret />
              </Slot>
            </SmallRow>
          </Col>
          <Big $w={37}>
            <BigIcon>
              <SortIcon />
            </BigIcon>
            Sort &amp;
            <ToolLine>
              Filter <Caret />
            </ToolLine>
          </Big>
          <Big $w={40}>
            <BigIcon>
              <FindIcon />
            </BigIcon>
            Find &amp;
            <ToolLine>
              Select <Caret />
            </ToolLine>
          </Big>
        </GroupBody>
        <Foot label="Editing" />
      </Group>
      <Collapse>
        <Chevron up />
      </Collapse>
    </Ribbon>
  );
}

function SheetGrid() {
  return (
    <Grid>
      <Corner>
        <svg width="14" height="13" viewBox="0 0 14 13">
          <path d="M14 0v13H0z" fill="#b9b9b9" />
        </svg>
      </Corner>
      {COLUMNS.map((c) => (
        <ColHead key={c} $on={c === "J"}>
          {c}
        </ColHead>
      ))}

      <RowHead>1</RowHead>
      <TitleCell>BOQ Format for Electrical Work</TitleCell>
      <Blank />
      <Blank />

      <RowHead>2</RowHead>
      {HEADERS.map((h, i) => (
        <HeadCell key={i}>{h}</HeadCell>
      ))}
      <Blank />
      <Blank />

      {ITEMS.map((row, r) => (
        <React.Fragment key={r}>
          <RowHead>{r + 3}</RowHead>
          {row.map((v, i) => (
            <DataCell key={i} $align={ALIGN[i]} $total={i === 9} $ls={TRACKING[i]}>
              {v}
            </DataCell>
          ))}
          <Blank />
          <Blank />
        </React.Fragment>
      ))}

      <RowHead>10</RowHead>
      <SummaryCell>SUMMARY / GRAND TOTAL</SummaryCell>
      <SummaryTotal>175750.00</SummaryTotal>
      <Blank />
      <Blank />

      {EMPTY_ROWS.map((label) => (
        <React.Fragment key={label || "end"}>
          <RowHead>{label}</RowHead>
          {COLUMNS.map((c) => (
            <Blank key={c} />
          ))}
        </React.Fragment>
      ))}
    </Grid>
  );
}

const tailStroke = { fill: "#4676c6", stroke: "#2f5592", strokeWidth: 1.5 };

export default function App() {
  return (
    <Window>
      <GlobalStyle />
      <TitleBar>
        <BarSide>
          <Slot $w={18}>
            <SaveIcon />
          </Slot>
          <Slot $w={20} $ml={7}>
            <UndoIcon />
          </Slot>
          <Slot $w={8}>
            <Caret $light />
          </Slot>
          <Slot $w={20} $ml={6}>
            <UndoIcon faded />
          </Slot>
          <Slot $w={8}>
            <Caret $light />
          </Slot>
          <Slot $w={14} $ml={7}>
            <QuickMenu />
          </Slot>
        </BarSide>
        <span>BOQ Format for Electrical Work</span>
        <BarSide $end>
          <SignIn>Sign in</SignIn>
          <Slot $w={40}>
            <RibbonMode />
          </Slot>
          <Slot $w={40}>—</Slot>
          <Slot $w={40}>
            <Restore />
          </Slot>
          <Slot $w={36}>
            <CloseX />
          </Slot>
        </BarSide>
      </TitleBar>

      <TabBar>
        <Tab $w={51} $pr={9}>File</Tab>
        <Tab $w={54} $active>Home</Tab>
        <Tab $w={53}>Insert</Tab>
        <Tab $w={85}>Page Layout</Tab>
        <Tab $w={71}>Formulas</Tab>
        <Tab $w={48}>Data</Tab>
        <Tab $w={59}>Review</Tab>
        <Tab $w={50}>View</Tab>
        <Tab $w={47}>Help</Tab>
        <TellMe>
          <Lightbulb size={14} strokeWidth={1.4} />
          Tell me wnse st·seat to do
        </TellMe>
        <Share>
          <UserPlus size={14} strokeWidth={1.4} />
          Share
        </Share>
      </TabBar>

      <RibbonPanel />

      <FormulaBand>
        <NameBox>
          A14
          <Caret />
        </NameBox>
        <Dots>⋮</Dots>
        <FxBox>
          <Slot $w={32}>
            <svg width="11" height="11" viewBox="0 0 11 11" stroke="#bbb" strokeWidth="1.300">
              <path d="M1 1l9 9M10 1l-9 9" />
            </svg>
          </Slot>
          <Slot $w={32}>
            <svg width="13" height="11" viewBox="0 0 13 11" fill="none" stroke="#bbb" strokeWidth="1.300">
              <path d="M1 6l4 4 7-9" />
            </svg>
          </Slot>
          <Slot $w={30}>
            <FxText>fx</FxText>
          </Slot>
        </FxBox>
        <FormulaInput>
          <Chevron />
        </FormulaInput>
      </FormulaBand>

      <SheetArea>
        <SheetGrid />
        <VScroll>
          <ScrollBtn />
          <VThumb />
          <VTrack />
          <ScrollBtn $down />
        </VScroll>
        <Watermark>
          <MarkTop>CCI</MarkTop>
          <MarkScript>Estimate</MarkScript>
          <MarkLine>CONSTRUCTION INDIA</MarkLine>
        </Watermark>

        <Callout $x={70} $y={357} $w={294} $h={64}>
          <Tail $x={49} $h={36} viewBox="0 0 99 36" width="99">
            <path d="M0 36 99 0 74 36" {...tailStroke} />
            <path d="M1 36h72v3H1z" fill="#4676c6" />
          </Tail>
          Detailed Electrical Items
        </Callout>
        <Callout $x={566} $y={374} $w={222} $h={80}>
          <Tail $x={19} $h={28} viewBox="0 0 73 28" width="73">
            <path d="M16 28 1 0 73 28" {...tailStroke} />
            <path d="M17 28h54v3H17z" fill="#4676c6" />
          </Tail>
          Professional
          <br />
          Electrical BOQ
        </Callout>
        <Callout $x={842} $y={368} $w={314} $h={46}>
          <Tail $x={184} $h={26} viewBox="0 0 78 26" width="78">
            <path d="M0 26 54 0 78 26" {...tailStroke} />
            <path d="M2 26h74v3H2z" fill="#4676c6" />
          </Tail>
          Automatic Cost Extension
        </Callout>
      </SheetArea>

      <SheetStrip>
        <Slot $w={8} />
        <NavArrow $w={22} />
        <NavArrow $w={24} $right />
        <Slot $w={25} />
        <SheetTab $w={55} $active>Sheet1</SheetTab>
        <SheetTab $w={53}>Sheet2</SheetTab>
        <Sep $w={1} />
        <AddSheet>+</AddSheet>
        <SplitDots>⋮</SplitDots>
        <Slot $w={7} />
        <HScroll>
          <HButton />
          <HThumb />
          <HButton $right />
        </HScroll>
      </SheetStrip>

      <StatusBar>
        Ready
        <Slot $w={12} $ml={23}>
          <MacroIcon />
        </Slot>
        <StatusRight>
          <ViewBtn $w={30} $on>
            <NormalView />
          </ViewBtn>
          <ViewBtn $w={32}>
            <PageView />
          </ViewBtn>
          <ViewBtn $w={32}>
            <BreakView />
          </ViewBtn>
          <ZoomSign $w={16}>−</ZoomSign>
          <ZoomTrack>
            <ZoomThumb />
          </ZoomTrack>
          <ZoomSign $w={15}>+</ZoomSign>
          <ZoomValue>100%</ZoomValue>
        </StatusRight>
      </StatusBar>

      <Taskbar>
        <Slot $w={36}>
          <StartLogo />
        </Slot>
        <SearchBox>
          <Search size={15} strokeWidth={1.5} style={{ transform: "scaleX(-1)" }} />
          Type here to search
        </SearchBox>
        <Slot $w={40}>
          <svg width="13" height="13" viewBox="0 0 13 13" fill="none" stroke="#e5e9ee" strokeWidth="1.500">
            <circle cx="6.500" cy="6.500" r="5.500" />
          </svg>
        </Slot>
        <Slot $w={40}>
          <TaskView />
        </Slot>
        <Slot $w={44} $ml={2}>
          <EdgeIcon />
        </Slot>
        <Slot $w={41}>
          <FolderIcon />
        </Slot>
        <Slot $w={42}>
          <MailIcon />
        </Slot>
        <Slot $w={44}>
          <ChromeIcon />
        </Slot>
        <ActiveApp $w={40}>
          <ExcelIcon />
        </ActiveApp>
        <Tray>
          <Slot $w={20}>
            <TrayUp />
          </Slot>
          <Slot $w={20}>
            <Battery />
          </Slot>
          <Slot $w={20} $ml={1}>
            <Wifi />
          </Slot>
          <Slot $w={19}>
            <Volume />
          </Slot>
          <Slot $w={28}>ENG</Slot>
          <Clock>
            13.31
            <br />
            12-02-2029
          </Clock>
          <Slot $w={32}>
            <Notify />
          </Slot>
        </Tray>
      </Taskbar>
    </Window>
  );
}
